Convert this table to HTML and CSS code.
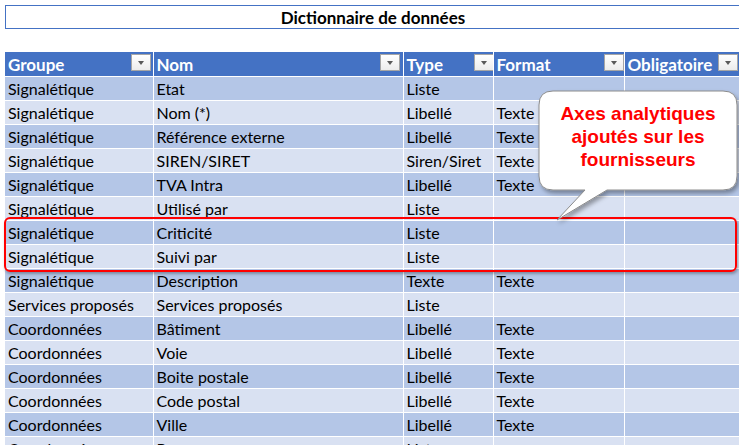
FILE: index.html
```html
<!DOCTYPE html>
<html lang="fr">
<head>
<meta charset="utf-8">
<title>Dictionnaire de données</title>
<link rel="stylesheet" href="styles.css">
</head>
<body>
<div class="sheet">
  <div class="title">Dictionnaire de données</div>
  <table class="dict">
    <thead>
      <tr>
        <th class="c1"><span>Groupe</span><i class="dd"></i></th>
        <th class="c2"><span>Nom</span><i class="dd"></i></th>
        <th class="c3"><span>Type</span><i class="dd"></i></th>
        <th class="c4"><span>Format</span><i class="dd"></i></th>
        <th class="c5"><span>Obligatoire</span><i class="dd"></i></th>
      </tr>
    </thead>
    <tbody>
      <tr><td>Signalétique</td><td>Etat</td><td>Liste</td><td></td><td></td></tr>
      <tr><td>Signalétique</td><td>Nom (*)</td><td>Libellé</td><td>Texte</td><td></td></tr>
      <tr><td>Signalétique</td><td>Référence externe</td><td>Libellé</td><td>Texte</td><td></td></tr>
      <tr><td>Signalétique</td><td>SIREN/SIRET</td><td>Siren/Siret</td><td>Texte</td><td></td></tr>
      <tr><td>Signalétique</td><td>TVA Intra</td><td>Libellé</td><td>Texte</td><td></td></tr>
      <tr><td>Signalétique</td><td>Utilisé par</td><td>Liste</td><td></td><td></td></tr>
      <tr><td>Signalétique</td><td>Criticité</td><td>Liste</td><td></td><td></td></tr>
      <tr><td>Signalétique</td><td>Suivi par</td><td>Liste</td><td></td><td></td></tr>
      <tr><td>Signalétique</td><td>Description</td><td>Texte</td><td>Texte</td><td></td></tr>
      <tr><td>Services proposés</td><td>Services proposés</td><td>Liste</td><td></td><td></td></tr>
      <tr><td>Coordonnées</td><td>Bâtiment</td><td>Libellé</td><td>Texte</td><td></td></tr>
      <tr><td>Coordonnées</td><td>Voie</td><td>Libellé</td><td>Texte</td><td></td></tr>
      <tr><td>Coordonnées</td><td>Boite postale</td><td>Libellé</td><td>Texte</td><td></td></tr>
      <tr><td>Coordonnées</td><td>Code postal</td><td>Libellé</td><td>Texte</td><td></td></tr>
      <tr><td>Coordonnées</td><td>Ville</td><td>Libellé</td><td>Texte</td><td></td></tr>
      <tr><td>Coordonnées</td><td>Pays</td><td>Liste</td><td></td><td></td></tr>
    </tbody>
  </table>

  <div class="highlight"></div>

  <svg class="callout-shape" width="739" height="445" viewBox="0 0 739 445">
    <defs>
      <filter id="sh" x="-20%" y="-20%" width="140%" height="150%">
        <feDropShadow dx="2" dy="3" stdDeviation="2" flood-color="#000" flood-opacity="0.35"/>
      </filter>
    </defs>
    <path d="M553 91 H723 Q737 91 737 105 V176 Q737 190 723 190 H607 L557 220 L585 190 H553 Q539 190 539 176 V105 Q539 91 553 91 Z"
          fill="#fff" stroke="#8c8c8c" stroke-width="1" filter="url(#sh)"/>
  </svg>
  <div class="callout-text">Axes analytiques<br>ajoutés sur les<br>fournisseurs</div>
</div>
</body>
</html>
```

FILE: styles.css
```css
html, body {
  margin: 0;
  padding: 0;
  background: #fff;
  overflow: hidden;
}

.sheet {
  position: relative;
  width: 739px;
  height: 445px;
  overflow: hidden;
  padding: 5px 0 0 5px;
  box-sizing: border-box;
  font-family: Lato, "Liberation Sans", sans-serif;
  font-size: 16px;
  color: #000;
}

.title {
  width: 734px;
  height: 22px;
  border: 1px solid #4472c4;
  text-align: center;
  font-weight: bold;
  line-height: 23px;
  font-size: 17px;
  color: #000;
  margin-bottom: 23px;
}

.dict {
  border-collapse: collapse;
  table-layout: fixed;
  width: 736px;
}

.dict th,
.dict td {
  padding: 1px 0 0 3px;
  border-right: 1px solid #fff;
  border-bottom: 1px solid #fff;
  text-align: left;
  white-space: nowrap;
  overflow: hidden;
  line-height: 22px;
  vertical-align: middle;
  box-sizing: border-box;
}

.dict td {
  height: 24px;
}

.dict th {
  height: 24px;
  padding-top: 3px;
  line-height: 20px;
  background: #4472c4;
  color: #fff;
  font-weight: bold;
  font-size: 17px;
  position: relative;
}

.c1 { width: 148px; }
.c2 { width: 250px; }
.c3 { width: 90px; }
.c4 { width: 131px; }
.c5 { width: 117px; }

.dd {
  position: absolute;
  top: 2px;
  width: 18px;
  height: 15px;
  border: 1px solid #a6a6a6;
  background: linear-gradient(#ffffff, #ececec);
  box-sizing: content-box;
}

.dd::after {
  content: "";
  position: absolute;
  left: 6px;
  top: 6px;
  border-left: 3.5px solid transparent;
  border-right: 3.5px solid transparent;
  border-top: 4px solid #595959;
}

.c1 .dd { left: 126px; }
.c2 .dd { left: 226px; }
.c3 .dd { left: 70px; }
.c4 .dd { left: 110px; }
.c5 .dd { left: 93px; }

.dict tbody tr:nth-child(odd) td { background: #b4c6e7; }
.dict tbody tr:nth-child(even) td { background: #d9e1f2; }

.highlight {
  position: absolute;
  left: 4px;
  top: 217px;
  width: 729px;
  height: 51px;
  border: 2px solid #ff0000;
  border-radius: 6px;
  box-shadow: 1px 2px 3px rgba(0, 0, 0, 0.3);
}

.callout-shape {
  position: absolute;
  left: 0;
  top: 0;
}

.callout-text {
  position: absolute;
  left: 539px;
  top: 102px;
  width: 198px;
  text-align: center;
  font-family: "Liberation Sans", Arial, sans-serif;
  font-weight: bold;
  font-size: 19px;
  line-height: 23px;
  color: #ff0000;
}
```
